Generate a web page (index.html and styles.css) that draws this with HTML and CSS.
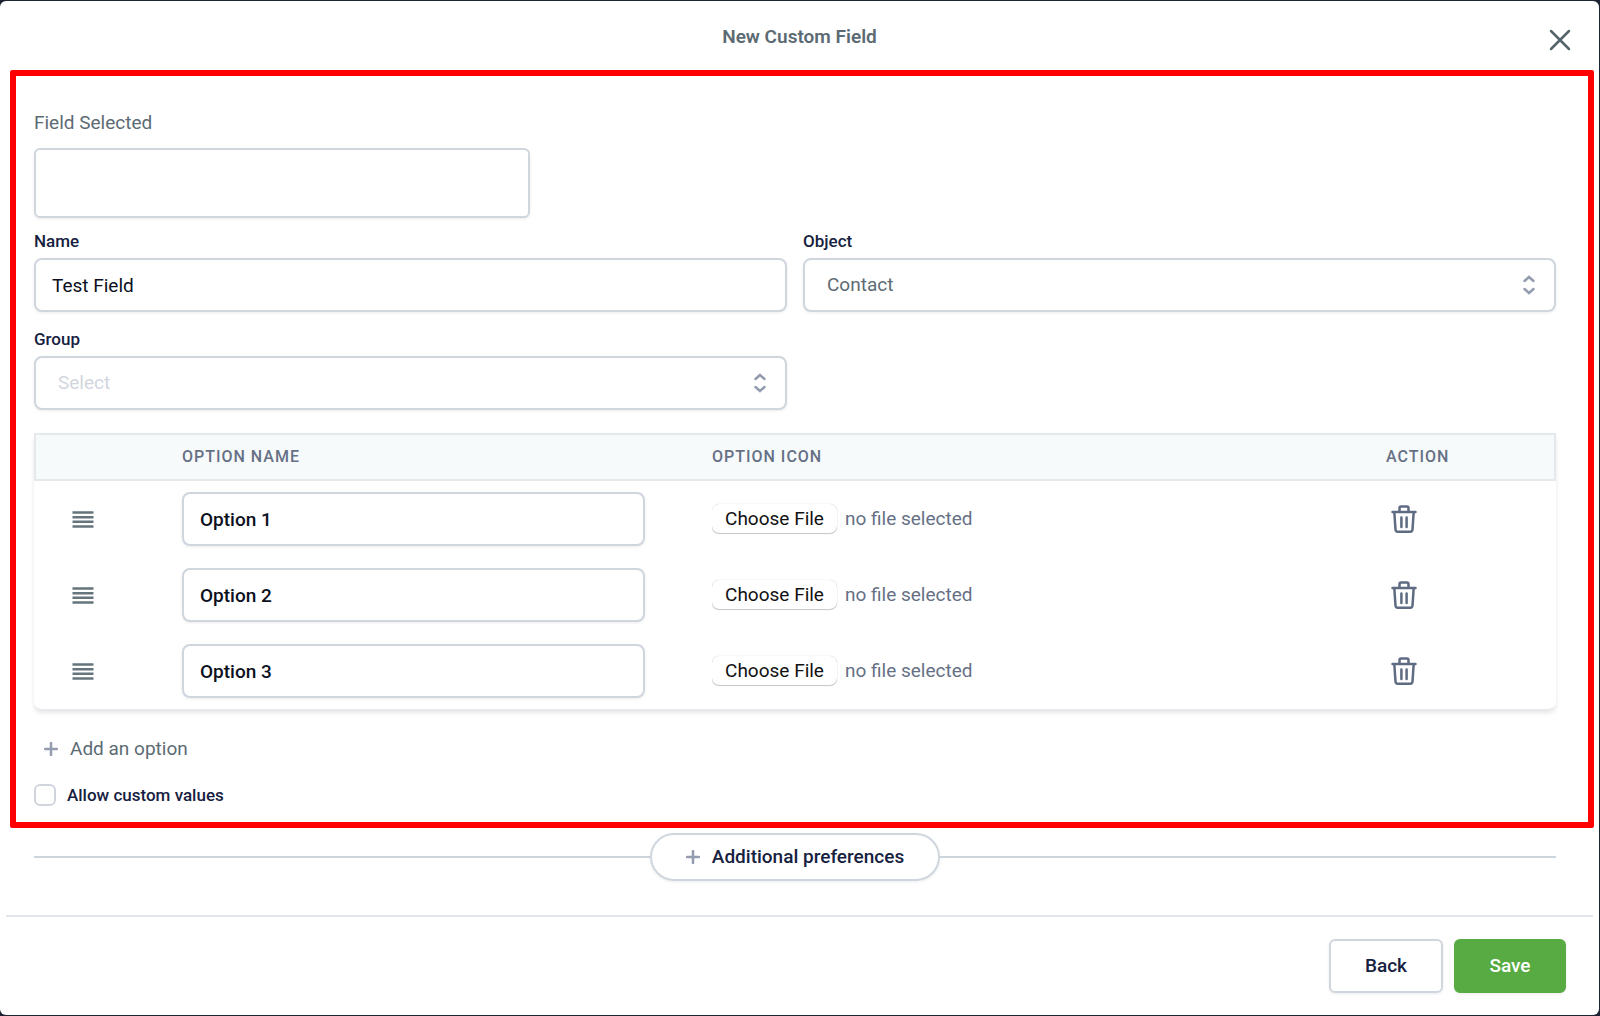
FILE: index.html
```html
<!DOCTYPE html>
<html lang="en">

<head>
    <meta charset="UTF-8">
    <title>New Custom Field</title>
    <link rel="stylesheet" href="styles.css">
</head>

<body>
    <!-- Shared icons -->
    <svg width="0" height="0" class="sprite" aria-hidden="true">
        <symbol id="icon-close" viewBox="0 0 22 22">
            <path d="M2 2l18 18M20 2L2 20" />
        </symbol>
        <symbol id="icon-sort" viewBox="0 0 14 22">
            <path d="M2.500 7L7 3l4.500 4M2.500 15L7 19l4.500-4" />
        </symbol>
        <symbol id="icon-plus" viewBox="0 0 14 14">
            <path d="M7 1v12M1 7h12" />
        </symbol>
        <symbol id="icon-drag" viewBox="0 0 22 18">
            <path d="M.5 2.500h21M.5 7.200h21M.5 11.800h21M.5 16.500h21" />
        </symbol>
        <symbol id="icon-trash" viewBox="0 0 26 28">
            <path d="M1.500 7h23M8.500 7V3.200a1.600 1.600 0 0 1 1.600-1.600h5.800a1.600 1.600 0 0 1 1.600 1.600V7M3.300 7l1.200 17.500A2.200 2.200 0 0 0 6.700 26.700h12.600a2.200 2.200 0 0 0 2.200-2.200L22.700 7M10.400 12.500v9.500M15.600 12.500v9.500" />
        </symbol>
    </svg>

    <div class="modal">
        <header class="modal-header">
            <h1>New Custom Field</h1>
            <button type="button" class="close-btn" aria-label="Close"><svg class="icon-close"><use href="#icon-close" /></svg></button>
        </header>

        <form class="modal-form">
            <section class="field-panel">
                <label class="field-title" for="field_selected">Field Selected</label>
                <input type="text" id="field_selected" class="control field-selected" readonly>

                <div class="field-grid">
                    <div class="field">
                        <label for="name">Name</label>
                        <input type="text" id="name" class="control" value="Test Field">
                    </div>
                    <div class="field">
                        <label for="object">Object</label>
                        <div class="select-wrap">
                            <select id="object" class="control">
                                <option>Contact</option>
                            </select>
                            <svg class="icon-sort"><use href="#icon-sort" /></svg>
                        </div>
                    </div>
                    <div class="field">
                        <label for="group">Group</label>
                        <div class="select-wrap">
                            <select id="group" class="control placeholder">
                                <option>Select</option>
                            </select>
                            <svg class="icon-sort"><use href="#icon-sort" /></svg>
                        </div>
                    </div>
                </div>

                <table class="options">
                    <thead>
                        <tr>
                            <th class="col-drag"></th>
                            <th class="col-name">Option Name</th>
                            <th>Option Icon</th>
                            <th class="col-action">Action</th>
                        </tr>
                    </thead>
                    <tbody>
                        <tr>
                            <td><svg class="icon-drag"><use href="#icon-drag" /></svg></td>
                            <td><input type="text" class="control option-input" aria-label="Option name" value="Option 1"></td>
                            <td>
                                <div class="file">
                                    <input type="file" id="icon_1" aria-label="Option icon">
                                    <label for="icon_1">no file selected</label>
                                </div>
                            </td>
                            <td><button type="button" class="trash-btn" aria-label="Delete"><svg class="icon-trash"><use href="#icon-trash" /></svg></button></td>
                        </tr>
                        <tr>
                            <td><svg class="icon-drag"><use href="#icon-drag" /></svg></td>
                            <td><input type="text" class="control option-input" aria-label="Option name" value="Option 2"></td>
                            <td>
                                <div class="file">
                                    <input type="file" id="icon_2" aria-label="Option icon">
                                    <label for="icon_2">no file selected</label>
                                </div>
                            </td>
                            <td><button type="button" class="trash-btn" aria-label="Delete"><svg class="icon-trash"><use href="#icon-trash" /></svg></button></td>
                        </tr>
                        <tr>
                            <td><svg class="icon-drag"><use href="#icon-drag" /></svg></td>
                            <td><input type="text" class="control option-input" aria-label="Option name" value="Option 3"></td>
                            <td>
                                <div class="file">
                                    <input type="file" id="icon_3" aria-label="Option icon">
                                    <label for="icon_3">no file selected</label>
                                </div>
                            </td>
                            <td><button type="button" class="trash-btn" aria-label="Delete"><svg class="icon-trash"><use href="#icon-trash" /></svg></button></td>
                        </tr>
                    </tbody>
                </table>

                <button type="button" class="add-btn"><svg class="icon-plus"><use href="#icon-plus" /></svg>Add an option</button>

                <div class="check">
                    <input type="checkbox" id="allow_custom">
                    <label for="allow_custom">Allow custom values</label>
                </div>
            </section>

            <div class="more">
                <button type="button" class="more-btn"><svg class="icon-plus"><use href="#icon-plus" /></svg>Additional preferences</button>
            </div>

            <footer class="modal-footer">
                <button type="button" class="btn">Back</button>
                <button type="submit" class="btn btn-save">Save</button>
            </footer>
        </form>
    </div>
</body>

</html>
```

FILE: styles.css
```css
* {
    box-sizing: border-box;
}

body {
    font-family: Roboto, "Liberation Sans", sans-serif;
    font-size: 19px;
    line-height: 24px;
    color: #5c6b73;
    background-color: #1c2431;
    margin: 0;
    padding: 1px 1px 1px 0;
}

button,
input,
select {
    font: inherit;
    color: inherit;
    margin: 0;
}

button {
    background: none;
    border: none;
    padding: 0;
    cursor: pointer;
}

svg {
    display: block;
    fill: none;
    stroke: currentColor;
}

.sprite {
    position: absolute;
}

.modal {
    background-color: #fff;
    border-radius: 6px;
    min-height: calc(100vh - 2px);
}

/* Header */
.modal-header {
    display: grid;
    grid-template-columns: 1fr auto 1fr;
    align-items: center;
    height: 69px;
    padding: 8px 28px 0;
}

.modal-header h1 {
    grid-column: 2;
    font-size: 19px;
    font-weight: 600;
    margin: 0 0 6px;
}

.close-btn {
    justify-self: end;
    color: #56656c;
}

.icon-close {
    width: 22px;
    height: 22px;
    stroke-width: 2.5;
    stroke-linecap: round;
}

/* Outlined panel with the field settings */
.field-panel {
    margin: 0 5px 0 10px;
    padding: 35px 32px 16px 18px;
    border: 6px solid #f00;
    border-radius: 2px;
}

.field-title {
    display: block;
    margin-bottom: 13px;
}

.control {
    display: block;
    width: 100%;
    height: 54px;
    padding: 0 16px;
    color: #0b1020;
    background-color: #fff;
    border: 2px solid #cfd6dd;
    border-radius: 8px;
    box-shadow: 0 1px 3px rgba(0, 0, 0, 0.08);
    appearance: none;
}

.field-selected {
    width: 496px;
    height: 70px;
    margin-bottom: 12px;
    border-radius: 6px;
}

.field-grid {
    display: grid;
    grid-template-columns: 1fr 1fr;
    gap: 16px;
    margin-bottom: 23px;
}

.field label {
    display: block;
    font-size: 17px;
    font-weight: 500;
    line-height: 22px;
    color: #16213f;
    margin-bottom: 6px;
}

.select-wrap {
    display: grid;
    align-items: center;
}

.select-wrap > * {
    grid-area: 1 / 1;
}

.select-wrap .control {
    padding: 0 22px;
    color: #5c6b73;
}

.select-wrap .placeholder {
    color: #d2d6de;
}

.icon-sort {
    justify-self: end;
    width: 14px;
    height: 22px;
    margin-right: 20px;
    color: #949db0;
    stroke-width: 2.5;
    stroke-linecap: round;
    pointer-events: none;
}

/* Options table */
.options {
    width: 100%;
    table-layout: fixed;
    border-spacing: 0;
    margin-bottom: 26px;
    border-bottom: 2px solid #e8e9ed;
    border-radius: 8px;
    box-shadow: 0 2px 4px rgba(0, 0, 0, 0.1);
}

.options th {
    height: 48px;
    padding: 0;
    font-size: 16px;
    font-weight: 500;
    letter-spacing: 1px;
    text-align: left;
    text-transform: uppercase;
    color: #667085;
    background-color: #f7fafb;
    border: 0 solid #e5e9ed;
    border-width: 2px 0;
}

.options th:first-child {
    border-left-width: 2px;
}

.options th:last-child {
    border-right-width: 2px;
}

.options td {
    padding: 11px 0;
}

.col-drag {
    width: 148px;
}

.col-name {
    width: 530px;
}

.col-action {
    width: 170px;
}

.icon-drag {
    width: 22px;
    height: 18px;
    margin-left: 38px;
    color: #66757c;
    stroke-width: 2.5;
}

.option-input {
    width: 463px;
}

.option-input {
    font-weight: 500;
}

.file {
    display: flex;
    align-items: center;
    gap: 7px;
    color: #667085;
}

.file input {
    width: 126px;
    height: 32px;
    padding: 1px 1px 2px 0;
    color: transparent;
}

.file input::file-selector-button {
    height: 29px;
    width: 125px;
    margin: 0 10px 0 0;
    padding: 0;
    font: inherit;
    line-height: 26px;
    color: #111;
    background-color: #fff;
    border: none;
    border-radius: 7px;
    box-shadow: 0 0 1px rgba(0, 0, 0, 0.3), 0 1px 1px rgba(0, 0, 0, 0.2);
}

.trash-btn {
    display: block;
    margin-left: 5px;
    color: #5f6b82;
}

.icon-trash {
    width: 26px;
    height: 28px;
    stroke-width: 2.5;
    stroke-linecap: round;
    stroke-linejoin: round;
}

.add-btn {
    display: flex;
    align-items: center;
    gap: 12px;
    margin: 0 0 23px 10px;
}

.icon-plus {
    width: 14px;
    height: 14px;
    color: #949db0;
    stroke-width: 2.5;
    stroke-linecap: round;
}

.check {
    display: flex;
    align-items: center;
    gap: 11px;
    font-size: 17px;
    font-weight: 500;
    line-height: 22px;
    color: #16213f;
}

.check input {
    width: 22px;
    height: 22px;
    background-color: #fff;
    border: 2px solid #d0d5dd;
    border-radius: 6px;
    appearance: none;
}

/* Divider with the preferences button */
.more {
    display: flex;
    align-items: center;
    margin: 5px 43px 34px 34px;
}

.more::before,
.more::after {
    content: "";
    flex: 1;
    height: 2px;
    background-color: #cdd5dc;
}

.more-btn {
    display: flex;
    align-items: center;
    gap: 12px;
    height: 48px;
    padding: 0 34px;
    font-weight: 500;
    color: #16213f;
    border: 2px solid #cfd6dd;
    border-radius: 24px;
    box-shadow: 0 1px 3px rgba(0, 0, 0, 0.08);
}

/* Footer */
.modal-footer {
    display: flex;
    justify-content: flex-end;
    gap: 11px;
    margin: 0 6px;
    padding: 22px 27px 21px;
    border-top: 2px solid #e2e5e9;
}

.btn {
    width: 114px;
    height: 54px;
    font-weight: 500;
    color: #16213f;
    border: 2px solid #cfd6dd;
    border-radius: 6px;
    box-shadow: 0 1px 3px rgba(0, 0, 0, 0.08);
}

.btn-save {
    width: 112px;
    color: #fff;
    background-color: #57ab42;
    border-color: #57ab42;
}
```
